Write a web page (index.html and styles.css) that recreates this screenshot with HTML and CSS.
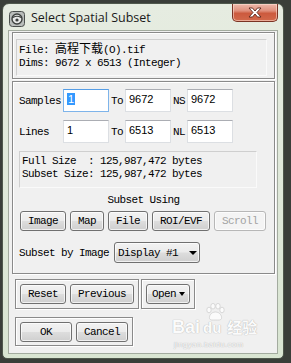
FILE: index.html
```html
<!DOCTYPE html>
<html>
<head>
<meta charset="utf-8">
<title>Select Spatial Subset</title>
<link rel="stylesheet" href="styles.css">
</head>
<body>
<div class="window">
  <div class="titlebar">
    <svg class="app-icon" viewBox="0 0 16 16" aria-hidden="true">
      <rect x="0.5" y="0.5" width="15" height="15" rx="3" fill="#b9bdbb" stroke="#4a4f4d"/>
      <circle cx="8" cy="8" r="5" fill="#e6e8e7" stroke="#3c403e" stroke-width="1.4"/>
      <path d="M4 6.5 Q8 4 12 6.5" fill="none" stroke="#3c403e" stroke-width="1.2"/>
      <circle cx="8" cy="9" r="1.6" fill="#3c403e"/>
    </svg>
    <span class="title">Select Spatial Subset</span>
    <div class="close">
      <svg viewBox="0 0 14 11" class="close-x" aria-hidden="true">
        <path d="M1 1 H4.5 L7 4 L9.5 1 H13 L9 5.5 L13 10 H9.5 L7 7 L4.5 10 H1 L5 5.5 Z" fill="#fff" stroke="#5a2418" stroke-width="0.9" stroke-linejoin="round"/>
      </svg>
    </div>
  </div>

  <div class="client">
    <div class="panel file-panel">
      <div class="info file-info">
        <div class="line first-line">File: <span class="cjk">高程下载</span>(O).tif</div>
        <div class="line">Dims: 9672 x 6513 (Integer)</div>
      </div>
    </div>

    <div class="panel main-panel">
      <div class="row">
        <span class="lbl">Samples</span>
        <div class="field focused"><span class="sel">1</span></div>
        <span class="mid">To</span>
        <div class="field">9672</div>
        <span class="mid">NS</span>
        <div class="field">9672</div>
      </div>
      <div class="row row-lines">
        <span class="lbl">Lines</span>
        <div class="field">1</div>
        <span class="mid">To</span>
        <div class="field">6513</div>
        <span class="mid">NL</span>
        <div class="field">6513</div>
      </div>

      <div class="info size-info">
        <div class="line">Full Size&nbsp;&nbsp;: 125,987,472 bytes</div>
        <div class="line">Subset Size: 125,987,472 bytes</div>
      </div>

      <div class="caption">Subset Using</div>

      <div class="btn-row">
        <button class="btn">Image</button>
        <button class="btn">Map</button>
        <button class="btn">File</button>
        <button class="btn">ROI/EVF</button>
        <button class="btn disabled">Scroll</button>
      </div>

      <div class="by-row">
        <span class="by-lbl">Subset by Image</span>
        <div class="dropdown">
          <span>Display #1</span>
          <span class="arrow"></span>
        </div>
      </div>
    </div>

    <div class="bottom-row">
      <div class="panel small-panel">
        <button class="btn">Reset</button>
        <button class="btn">Previous</button>
      </div>
      <div class="panel small-panel">
        <button class="btn open-btn">Open<span class="arrow"></span></button>
      </div>
    </div>

    <div class="panel small-panel ok-panel">
      <button class="btn wide">OK</button>
      <button class="btn wide">Cancel</button>
    </div>

    <div class="watermark">
      <svg class="wm-paw" viewBox="0 0 20 18" aria-hidden="true">
        <g fill="#fbfbfb" stroke="#c4c4c4" stroke-width="0.6">
          <ellipse cx="4" cy="7" rx="2.2" ry="2.8"/>
          <ellipse cx="8" cy="3.2" rx="2.2" ry="2.8"/>
          <ellipse cx="13" cy="3.2" rx="2.2" ry="2.8"/>
          <ellipse cx="17" cy="7" rx="2.2" ry="2.8"/>
          <path d="M10.5 9 C6 9 4 13 4.5 15.5 C5 17.5 8 17 10.5 17 C13 17 16 17.5 16.5 15.5 C17 13 15 9 10.5 9 Z"/>
        </g>
      </svg>
      <div class="wm-main">
        <span class="wm-bai">Bai</span>
        <span class="wm-du">du</span>
        <span class="wm-cn">经验</span>
      </div>
      <div class="wm-url">jingyan.baidu.com</div>
    </div>
  </div>
</div>
</body>
</html>
```

FILE: styles.css
```css
* { box-sizing: border-box; }

html, body {
  margin: 0;
  padding: 0;
}

body {
  width: 291px;
  height: 363px;
  overflow: hidden;
  background: #3a3e39;
  font-family: "Liberation Mono", "Noto Sans CJK SC", monospace;
  font-size: 11px;
  color: #000;
}

.window {
  width: 282px;
  height: 356px;
  margin: 3px 0 0 2px;
  border: 1px solid #4f584c;
  border-radius: 7px 7px 5px 5px;
  background: linear-gradient(#e6ece1, #d9e5d2);
  display: flex;
  flex-direction: column;
}

.titlebar {
  height: 26px;
  display: flex;
  align-items: flex-start;
  padding-left: 6px;
  flex: none;
}

.app-icon {
  width: 16px;
  height: 16px;
  margin-top: 7px;
  flex: none;
}

.title {
  font-family: "Open Sans", "Liberation Sans", sans-serif;
  font-size: 12.5px;
  line-height: 16px;
  margin-left: 6px;
  margin-top: 6px;
  color: #1a1a1a;
}

.close {
  margin-left: auto;
  margin-right: 5px;
  width: 46px;
  height: 18px;
  border: 1px solid #7a3324;
  border-top: none;
  border-radius: 0 0 5px 5px;
  background: linear-gradient(#eeb9ab 0%, #e0907c 40%, #cc5a3e 55%, #d2694b 100%);
  box-shadow: inset 0 0 0 1px rgba(255, 225, 215, 0.55);
  display: flex;
  align-items: center;
  justify-content: center;
}

.close-x {
  width: 14px;
  height: 11px;
}

.client {
  position: relative;
  width: 270px;
  height: 324px;
  margin-left: 5px;
  background: #f0f0f0;
  border: 1px solid #a3ab9f;
  flex: none;
}

.panel {
  border: 1px solid #8a8a8a;
  box-shadow: inset 1px 1px 0 #fff, 1px 1px 0 #fff;
}

.file-panel {
  width: 263px;
  height: 47px;
  margin: 1px 0 0 3px;
  padding: 6px 0 0 3px;
}

.info {
  background: #f0f0f0;
  border: 1px solid #cfcfcf;
  border-right-color: #fafafa;
  border-bottom-color: #fafafa;
}

.line {
  line-height: 12.5px;
  white-space: pre;
  letter-spacing: -0.6px;
}

.file-info {
  width: 251px;
  height: 37px;
  padding: 1px 0 0 2px;
}

.first-line {
  line-height: 14px;
}

.cjk {
  font-family: "Noto Sans CJK SC", sans-serif;
  letter-spacing: 0;
  font-size: 12px;
}

.main-panel {
  width: 263px;
  height: 193px;
  margin: 2px 0 0 3px;
  padding: 7px 0 0 6px;
}

.row {
  display: flex;
  align-items: center;
  height: 23px;
}

.row-lines {
  margin-top: 8px;
}

.lbl {
  width: 44px;
  letter-spacing: -0.6px;
}

.mid {
  width: 16px;
  text-align: center;
  letter-spacing: -0.6px;
}

.field {
  width: 46px;
  height: 23px;
  background: #fff;
  border: 1px solid #dcdfe3;
  border-top-color: #abadb3;
  font-family: "Liberation Sans", sans-serif;
  font-size: 11px;
  line-height: 13px;
  padding: 3px 0 0 3px;
}

.field.focused {
  border-color: #7eb4ea;
  border-top-color: #569de5;
}

.sel {
  background: #3399ff;
  color: #fff;
  padding: 0 1px;
}

.size-info {
  width: 238px;
  height: 37px;
  margin-top: 8px;
  padding: 3px 0 0 2px;
}

.caption {
  text-align: center;
  line-height: 12px;
  margin: 6px 0 0 -6px;
  letter-spacing: -0.6px;
}

.btn-row {
  display: flex;
  gap: 4px;
  margin: 5px 0 0 1px;
}

.btn {
  font-family: "Liberation Mono", monospace;
  font-size: 11px;
  letter-spacing: -0.6px;
  height: 20px;
  padding: 0 7px;
  margin: 0;
  border: 1px solid #707070;
  border-radius: 3px;
  background: linear-gradient(#f2f2f2 0%, #ebebeb 48%, #dddddd 52%, #cfcfcf 100%);
  box-shadow: inset 0 0 0 1px rgba(255, 255, 255, 0.7);
  color: #000;
  line-height: 18px;
  display: flex;
  align-items: center;
  justify-content: center;
}

.btn.disabled {
  color: #a3a3a3;
  border-color: #b7b7b7;
  background: #f4f4f4;
}

.by-row {
  display: flex;
  align-items: center;
  margin-top: 11px;
}

.by-lbl {
  width: 95px;
  letter-spacing: -0.6px;
}

.dropdown {
  width: 86px;
  height: 21px;
  border: 1px solid #707070;
  border-radius: 3px;
  background: linear-gradient(#f2f2f2 0%, #ebebeb 48%, #dddddd 52%, #cfcfcf 100%);
  box-shadow: inset 0 0 0 1px rgba(255, 255, 255, 0.7);
  display: flex;
  align-items: center;
  padding-left: 3px;
  letter-spacing: -0.6px;
}

.arrow {
  width: 0;
  height: 0;
  border-left: 4px solid transparent;
  border-right: 4px solid transparent;
  border-top: 4px solid #000;
}

.dropdown .arrow {
  margin-left: 11px;
}

.bottom-row {
  display: flex;
  gap: 2px;
  margin: 5px 0 0 6px;
}

.small-panel {
  display: flex;
  gap: 4px;
  padding: 4px;
  height: 30px;
}

.open-btn {
  padding: 0 3px 0 5px;
  width: 44px;
  justify-content: flex-start;
}

.open-btn .arrow {
  margin-left: 3px;
  border-left-width: 3.5px;
  border-right-width: 3.5px;
}

.ok-panel {
  width: 118px;
  height: 29px;
  margin: 8px 0 0 6px;
}

.btn.wide {
  width: 52px;
}

.watermark {
  position: absolute;
  left: 163px;
  top: 272px;
  width: 96px;
  color: #fbfbfb;
  text-shadow: 0 0 1px #b5b5b5, 0 0 1px #c5c5c5;
  font-family: "Liberation Sans", "Noto Sans CJK SC", sans-serif;
}

.wm-paw {
  display: block;
  width: 20px;
  height: 18px;
  margin-left: 33px;
}

.wm-main {
  display: flex;
  align-items: baseline;
  font-size: 18px;
  font-weight: bold;
  line-height: 18px;
  margin-top: -3px;
}

.wm-du {
  font-size: 15px;
  margin-left: 3px;
}

.wm-cn {
  font-size: 15px;
  margin-left: 6px;
}

.wm-url {
  font-size: 8px;
  line-height: 10px;
  margin: 3px 0 0 2px;
  letter-spacing: 0.3px;
}
```
